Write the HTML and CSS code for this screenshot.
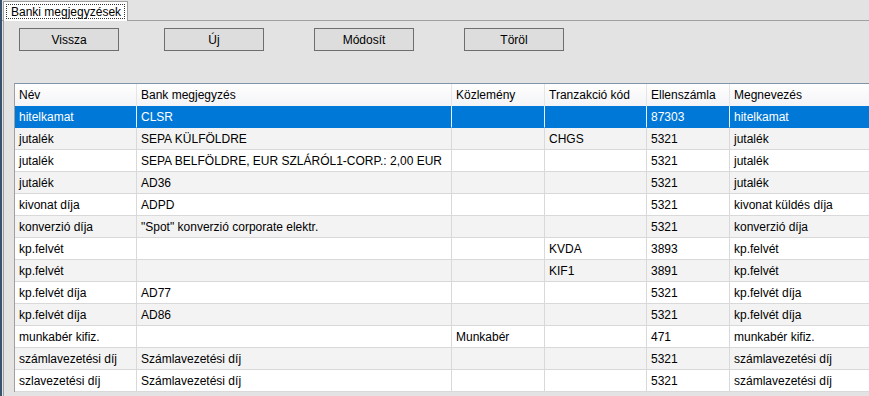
FILE: index.html
```html
<!DOCTYPE html>
<html lang="hu">
<head>
    <meta charset="UTF-8">
    <title>Banki megjegyzések</title>
    <link rel="stylesheet" href="styles.css">
</head>
<body>
    <div class="window">
        <div class="tab-strip">
            <div class="tab"><span class="tab-label">Banki megjegyzések</span></div>
        </div>

        <div class="panel">
            <div class="toolbar">
                <button class="btn">Vissza</button>
                <button class="btn">Új</button>
                <button class="btn">Módosít</button>
                <button class="btn">Töröl</button>
            </div>

            <table class="grid">
                <colgroup>
                    <col class="c-nev">
                    <col class="c-bank">
                    <col class="c-kozl">
                    <col class="c-tran">
                    <col class="c-ell">
                    <col class="c-megn">
                </colgroup>
                <thead>
                    <tr>
                        <th>Név</th>
                        <th>Bank megjegyzés</th>
                        <th>Közlemény</th>
                        <th>Tranzakció kód</th>
                        <th>Ellenszámla</th>
                        <th>Megnevezés</th>
                    </tr>
                </thead>
                <tbody id="rows"></tbody>
            </table>
        </div>
    </div>

    <script>
        const rows = [
            ['hitelkamat', 'CLSR', '', '', '87303', 'hitelkamat'],
            ['jutalék', 'SEPA KÜLFÖLDRE', '', 'CHGS', '5321', 'jutalék'],
            ['jutalék', 'SEPA BELFÖLDRE, EUR SZLÁRÓL1-CORP.: 2,00 EUR', '', '', '5321', 'jutalék'],
            ['jutalék', 'AD36', '', '', '5321', 'jutalék'],
            ['kivonat díja', 'ADPD', '', '', '5321', 'kivonat küldés díja'],
            ['konverzió díja', '"Spot" konverzió corporate elektr.', '', '', '5321', 'konverzió díja'],
            ['kp.felvét', '', '', 'KVDA', '3893', 'kp.felvét'],
            ['kp.felvét', '', '', 'KIF1', '3891', 'kp.felvét'],
            ['kp.felvét díja', 'AD77', '', '', '5321', 'kp.felvét díja'],
            ['kp.felvét díja', 'AD86', '', '', '5321', 'kp.felvét díja'],
            ['munkabér kifiz.', '', 'Munkabér', '', '471', 'munkabér kifiz.'],
            ['számlavezetési díj', 'Számlavezetési díj', '', '', '5321', 'számlavezetési díj'],
            ['szlavezetési díj', 'Számlavezetési díj', '', '', '5321', 'számlavezetési díj']
        ];

        const tbody = document.getElementById('rows');
        rows.forEach((row, i) => {
            const tr = document.createElement('tr');
            if (i === 0) tr.className = 'selected';
            row.forEach(value => {
                const td = document.createElement('td');
                td.textContent = value;
                tr.appendChild(td);
            });
            tbody.appendChild(tr);
        });
    </script>
</body>
</html>
```

FILE: styles.css
```css
html, body {
    margin: 0;
    height: 100%;
    overflow: hidden;
}
body {
    font-family: "Liberation Sans", Arial, sans-serif;
    font-size: 12px;
    background-color: #e3e3e3;
    color: #000;
}
.window {
    height: 100%;
    border-left: 2px solid #36526f;
    overflow: hidden;
}
.tab-strip {
    display: flex;
    height: 21px;
    padding-top: 1px;
    padding-left: 1px;
    border-bottom: 1px solid #a0a0a0;
    box-sizing: border-box;
}
.tab {
    width: 125px;
    height: 20px;
    padding: 2px;
    box-sizing: border-box;
    background-color: #fff;
    border: 1px solid #a0a0a0;
    border-bottom: none;
}
.tab-label {
    display: block;
    height: 15px;
    line-height: 15px;
    padding-left: 4px;
    border: 1px dotted #333;
    box-sizing: border-box;
    white-space: nowrap;
}
.panel {
    height: calc(100% - 21px);
    border-left: 1px solid #a0a0a0;
    margin-left: 1px;
    overflow: hidden;
}
.toolbar {
    display: flex;
    gap: 50px;
    padding: 7px 0 0 15px;
    height: 62px;
    box-sizing: border-box;
}
.btn {
    width: 100px;
    height: 23px;
    padding: 0;
    font-family: inherit;
    font-size: 12px;
    color: #000;
    background-color: #dddddd;
    border: 1px solid #6e6e6e;
    border-radius: 0;
}
.btn:first-child {
    margin-right: -5px;
}
.grid {
    margin-left: 10px;
    table-layout: fixed;
    width: 900px;
    border-collapse: separate;
    border-spacing: 0;
    border-top: 1px solid #8294ab;
    border-left: 1px solid #a0a0a0;
    background-color: #fff;
}
.c-nev { width: 122px; }
.c-bank { width: 315px; }
.c-kozl { width: 93px; }
.c-tran { width: 102px; }
.c-ell { width: 83px; }
.c-megn { width: 185px; }
th, td {
    box-sizing: border-box;
    height: 22px;
    padding: 0 0 0 4px;
    text-align: left;
    font-weight: normal;
    white-space: nowrap;
    overflow: hidden;
    border-right: 1px solid #d9d9d9;
    border-bottom: 1px solid #d9d9d9;
}
th {
    height: 22px;
    background: linear-gradient(#ffffff, #f3f4f7);
    border-right-color: #e5e5e5;
    border-bottom: none;
}
tbody tr:nth-child(even) td {
    background-color: #f3f3f3;
}
tbody tr:nth-child(odd) td {
    background-color: #fff;
}
tbody tr.selected td {
    background-color: #0078d7;
    color: #fff;
    border-right-color: #e8f1fb;
    border-bottom-color: #0078d7;
}
```
